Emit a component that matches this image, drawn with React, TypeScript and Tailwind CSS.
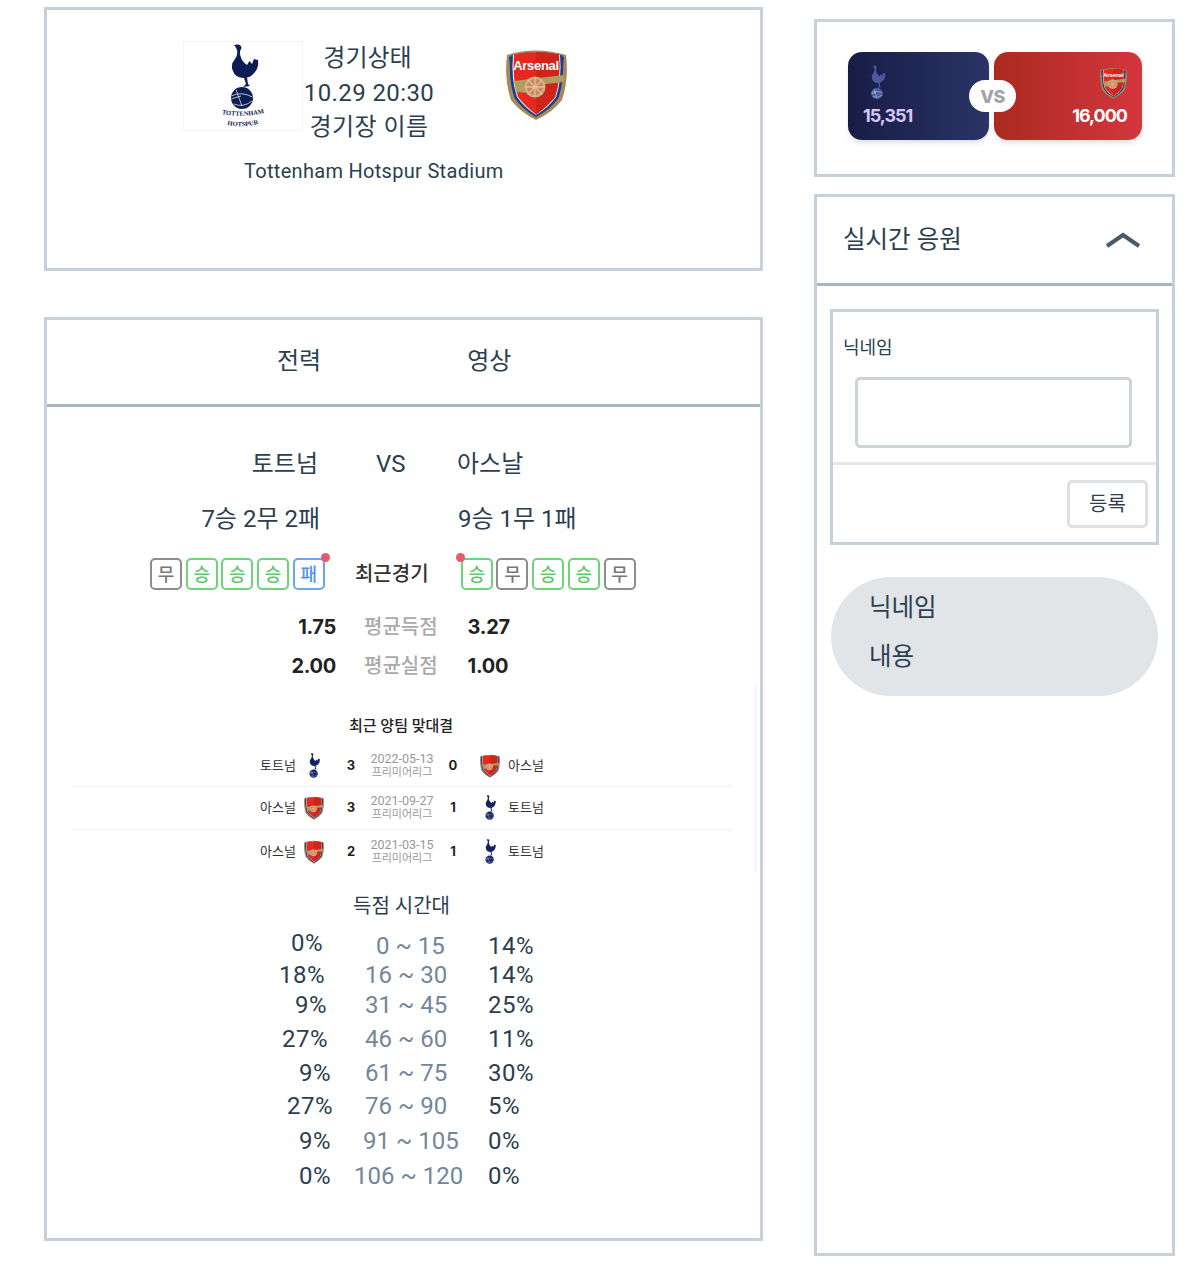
const font = "font-['Roboto','Noto_Sans_CJK_KR',sans-serif]";
const numFont = "font-['Inter','Noto_Sans_CJK_KR',sans-serif]";

function SpursLogo({ className, fill = "#0b1d54", label = false }: { className?: string; fill?: string; label?: boolean }) {
  return (
    <svg viewBox={label ? "0 0 44 85" : "0 0 44 68"} className={className}>
      <path
        fill={fill}
        d="M13 1L16 .5Q20 0 20.5 4Q18 8 19.5 12Q21 18 26 21L28.5 17L31 20L33 15L37 16Q38 23 34 28Q30 33 26 33.5L27 40L29 42L22 43L25 40L23 34Q14 34 11.5 26Q9.5 20 14 15Q17 11 16 6Q15 3 13 1Z"
      />
      <circle cx="21" cy="54" r="11" fill={fill} />
      <path d="M10.5 52Q20 47 31.5 53M13 60Q22 64 31 57M15 46L21 62M10 55L20 52" stroke="#fff" strokeWidth="0.7" fill="none" />
      {label && (
        <>
          <path id="spurs-top" d="M1 70Q22 74 43 69" fill="none" />
          <path id="spurs-bottom" d="M6 81Q22 84 38 80" fill="none" />
          <text fontSize="6.5" fontWeight="700" fill={fill} textAnchor="middle" fontFamily="Liberation Serif, serif">
            <textPath href="#spurs-top" startOffset="50%">TOTTENHAM</textPath>
          </text>
          <text fontSize="6.5" fontWeight="700" fill={fill} textAnchor="middle" fontFamily="Liberation Serif, serif">
            <textPath href="#spurs-bottom" startOffset="50%">HOTSPUR</textPath>
          </text>
        </>
      )}
    </svg>
  );
}

function ArsenalLogo({ className, text = true }: { className?: string; text?: boolean }) {
  return (
    <svg viewBox="0 0 61 71" className={className}>
      <path d="M1 6Q30 -3 60 6Q63 30 56 51Q47 63 30 71Q14 63 5 51Q-2 30 1 6Z" fill="#a5895a" />
      <path d="M3 8Q5 30 9 47L14 47L7 7ZM58 8Q56 30 52 47L47 47L54 7Z" fill="#1a3f8b" />
      <path d="M4.5 6.5Q30 0 56.5 6.5Q59 30 52.5 49Q45 60 30 68Q16 60 8.5 49Q2 30 4.5 6.5Z" fill="#1a3f8b" />
      <path d="M7 6Q30 1 54 6Q56 30 50 48Q43 58 30 66Q18 58 11 48Q5 30 7 6Z" fill="#fff" />
      <path d="M8 5.5Q30 1 53 5.5Q55 30 49 48Q42 57 30 65.5Q19 57 12 48Q6 30 8 5.5Z" fill="#e5291f" />
      <path d="M30 3Q42 3 53 5.5Q55 30 49 48Q42 57 30 65.5Z" fill="#cf2419" />
      {text && (
        <text x="30" y="21" textAnchor="middle" fontSize="13" fontWeight="700" fill="#fff" fontFamily="Liberation Sans, sans-serif" letterSpacing="-0.3">
          Arsenal
        </text>
      )}
      <path d="M8 32L24 30L58 26V33L40 35L22 44L10 43Z" fill="#b39a63" />
      <circle cx="29" cy="38" r="10.5" fill="#c9b184" />
      <circle cx="29" cy="38" r="8" fill="#e5291f" opacity="0.35" />
      <path d="M29 28V48M19 38H39M22 31L36 45M36 31L22 45" stroke="#d9c49a" strokeWidth="1.3" />
    </svg>
  );
}

function Badge({ v, dot }: { v: string; dot?: "left" | "right" }) {
  const tone = v === "승" ? "border-[#6fd37a] text-[#5ec96b]" : v === "패" ? "border-[#6aa5f5] text-[#4f92f2]" : "border-[#8d8d8d] text-[#777]";
  return (
    <div className={`relative flex h-[32px] w-[32px] items-center justify-center rounded-[5px] border-2 text-[18px] font-medium ${tone}`}>
      {v}
      {dot === "right" && <span className="absolute right-[-7px] top-[-7px] h-[9px] w-[9px] rounded-full bg-[#e8596a]" />}
      {dot === "left" && <span className="absolute left-[-7px] top-[-7px] h-[9px] w-[9px] rounded-full bg-[#e8596a]" />}
    </div>
  );
}

function MatchRow({ left, leftLogo, a, date, b, rightLogo, right, rowClass }: { left: string; leftLogo: string; a: number; date: string; b: number; rightLogo: string; right: string; rowClass: string }) {
  const logo = (t: string) =>
    t === "s" ? <SpursLogo className="h-[26px] w-[18px]" fill="#13235f" /> : <ArsenalLogo className="h-[24px] w-[20px]" text={false} />;
  return (
    <div className={`flex items-center ${rowClass}`}>
      <span className="w-[224px] text-right text-[13px] text-[#333]">{left}</span>
      <span className="ml-[7px] flex w-[22px] justify-center">{logo(leftLogo)}</span>
      <span className={`${numFont} ml-[19px] w-[14px] text-center text-[13px] font-bold text-[#222]`}>{a}</span>
      <div className="ml-[9px] w-[70px] text-center text-[#999]">
        <div className="text-[12.5px] leading-[14px]">{date}</div>
        <div className="text-[11px] leading-[14px]">프리미어리그</div>
      </div>
      <span className={`${numFont} ml-[9px] w-[14px] text-center text-[13px] font-bold text-[#222]`}>{b}</span>
      <span className="ml-[19px] flex w-[22px] justify-center">{logo(rightLogo)}</span>
      <span className="ml-[7px] text-[13px] text-[#333]">{right}</span>
    </div>
  );
}

const goalRows = [
  { l: "0%", lw: "w-[276px] mt-[-6px]", m: "0 ~ 15", mw: "pl-[53px] w-[165px]", r: "14%", h: "h-[30px]" },
  { l: "18%", lw: "w-[278px]", m: "16 ~ 30", mw: "pl-[40px] w-[163px]", r: "14%", h: "h-[28px]" },
  { l: "9%", lw: "w-[280px]", m: "31 ~ 45", mw: "pl-[38px] w-[161px]", r: "25%", h: "h-[32px]" },
  { l: "27%", lw: "w-[281px]", m: "46 ~ 60", mw: "pl-[37px] w-[160px]", r: "11%", h: "h-[36px]" },
  { l: "9%", lw: "w-[284px]", m: "61 ~ 75", mw: "pl-[34px] w-[157px]", r: "30%", h: "h-[32px]" },
  { l: "27%", lw: "w-[286px]", m: "76 ~ 90", mw: "pl-[32px] w-[155px]", r: "5%", h: "h-[34px]" },
  { l: "9%", lw: "w-[284px]", m: "91 ~ 105", mw: "pl-[32px] w-[157px]", r: "0%", h: "h-[36px]" },
  { l: "0%", lw: "w-[284px]", m: "106 ~ 120", mw: "pl-[23px] w-[157px]", r: "0%", h: "h-[34px]" },
];

export default function App() {
  return (
    <div className={`${font} flex min-h-[1284px] w-[1190px] items-start bg-white pl-[44px] text-[#2c3e50]`}>
      <div className="flex w-[719px] flex-col gap-[46px] pt-[7px]">
        <section className="h-[264px] border-[3px] border-[#c6d1dc]">
          <div className="flex items-start pt-[31px] pl-[136px]">
            <div className="flex h-[90px] w-[120px] items-center justify-center border border-[#f4f4f4]">
              <SpursLogo className="h-[85px] w-[44px]" label />
            </div>
            <div className="flex w-[132px] flex-col items-center whitespace-nowrap text-[24px] leading-[34.5px]">
              <span className="ml-[-3px]">경기상태</span>
              <span className="tracking-[0.4px]">10.29 20:30</span>
              <span className="tracking-[0.4px]">경기장 이름</span>
            </div>
            <ArsenalLogo className="ml-[71px] mt-[8px] h-[71px] w-[61px]" />
          </div>
          <p className="ml-[197px] mt-[12px] text-[20px] leading-[28px] tracking-[0.3px]">Tottenham Hotspur Stadium</p>
        </section>

        <section className="relative h-[924px] border-[3px] border-[#c6d1dc]">
          <div className="flex h-[87px] items-center border-b-[3px] border-[#a9b5c1] pl-[230px] pb-[3px] text-[24px]">
            <span>전력</span>
            <span className="ml-[146px]">영상</span>
          </div>

          <div className="mt-[37px] flex items-center text-[24px] leading-[40px]">
            <span className="w-[271px] text-right">토트넘</span>
            <span className="ml-[58px] w-[29px] text-center">VS</span>
            <span className="ml-[52px]">아스날</span>
          </div>
          <div className="mt-[15px] flex items-center text-[24px] leading-[40px]">
            <span className="w-[273px] text-right">7승 2무 2패</span>
            <span className="ml-[138px]">9승 1무 1패</span>
          </div>

          <div className="mt-[19px] flex items-center">
            <div className="ml-[103px] flex gap-[3.7px]">
              <Badge v="무" />
              <Badge v="승" />
              <Badge v="승" />
              <Badge v="승" />
              <Badge v="패" dot="right" />
            </div>
            <span className="ml-[30px] w-[74px] text-center text-[20px] font-medium text-[#333]">최근경기</span>
            <div className="ml-[32px] flex gap-[3.7px]">
              <Badge v="승" dot="left" />
              <Badge v="무" />
              <Badge v="승" />
              <Badge v="승" />
              <Badge v="무" />
            </div>
          </div>

          <div className="mt-[17px] flex h-[39px] items-center text-[20px]">
            <span className={`${numFont} w-[289px] text-right font-bold tracking-[-0.3px] text-[#222]`}>1.75</span>
            <span className="ml-[28px] font-medium text-[#aaa]">평균득점</span>
            <span className={`${numFont} ml-[30px] font-bold tracking-[-0.3px] text-[#222]`}>3.27</span>
          </div>
          <div className="flex h-[39px] items-center text-[20px]">
            <span className={`${numFont} w-[289px] text-right font-bold tracking-[-0.3px] text-[#222]`}>2.00</span>
            <span className="ml-[28px] font-medium text-[#aaa]">평균실점</span>
            <span className={`${numFont} ml-[30px] font-bold tracking-[-0.3px] text-[#222]`}>1.00</span>
          </div>

          <div className="mt-[29px] pl-[302px] text-[15px] font-medium leading-[24px] text-[#222]">최근 양팀 맞대결</div>
          <div className="mx-[25px] mt-[7px] w-[660px] text-[#333]">
            <MatchRow left="토트넘" leftLogo="s" a={3} date="2022-05-13" b={0} rightLogo="a" right="아스널" rowClass="h-[42px] border-b border-[#f0f1f3]" />
            <MatchRow left="아스널" leftLogo="a" a={3} date="2021-09-27" b={1} rightLogo="s" right="토트넘" rowClass="h-[43px] border-b border-[#f0f1f3]" />
            <MatchRow left="아스널" leftLogo="a" a={2} date="2021-03-15" b={1} rightLogo="s" right="토트넘" rowClass="h-[43px]" />
          </div>

          <div className="mt-[18px] pl-[306px] text-[20px] leading-[30px]">득점 시간대</div>
          <div className="mt-[10px] text-[24px]">
            {goalRows.map((row) => (
              <div key={row.m} className={`flex items-center ${row.h}`}>
                <span className={`text-right tracking-[0.5px] ${row.lw}`}>{row.l}</span>
                <span className={`text-[#74869a] ${row.mw}`}>{row.m}</span>
                <span className="tracking-[0.5px]">{row.r}</span>
              </div>
            ))}
          </div>

          <div className="absolute left-[707px] top-[365px] h-[187px] w-[3px] bg-[#f6f6f8]" />
        </section>
      </div>

      <aside className="ml-[51px] flex w-[361px] flex-col gap-[17px] pt-[19px]">
        <section className="flex h-[158px] items-start border-[3px] border-[#c6d1dc] pl-[31px] pt-[30px]">
          <div className="relative flex gap-[5px]">
            <div className="flex h-[88px] w-[141px] flex-col justify-between rounded-[14px] bg-gradient-to-r from-[#171d45] to-[#2b3468] px-[15px] pb-[14px] pt-[13px] shadow-md">
              <SpursLogo className="ml-[3px] h-[36px] w-[23px]" fill="#4a5a9a" />
              <span className={`${numFont} text-[18px] font-bold leading-[20px] tracking-[-1px] text-[#d9c5f5]`}>15,351</span>
            </div>
            <div className="flex h-[88px] w-[148px] flex-col items-end justify-between rounded-[14px] bg-gradient-to-r from-[#ab2a20] to-[#d4363c] px-[15px] pb-[14px] pt-[15px] shadow-md">
              <ArsenalLogo className="h-[32px] w-[27px]" />
              <span className={`${numFont} text-[18px] font-bold leading-[20px] tracking-[-1px] text-white`}>16,000</span>
            </div>
            <span className={`${numFont} absolute left-[121px] top-[28px] flex h-[32px] w-[47px] items-center justify-center rounded-full bg-white text-[18px] font-extrabold tracking-[-0.5px] text-[#a3a3a3]`}>
              VS
            </span>
          </div>
        </section>

        <section className="h-[1062px] border-[3px] border-[#c6d1dc]">
          <div className="flex h-[89px] items-center justify-between border-b-[3px] border-[#a9b5c1] pl-[26px] pr-[31px]">
            <span className="text-[24.5px]">실시간 응원</span>
            <svg viewBox="0 0 36 16" className="h-[16px] w-[36px]">
              <path d="M2 14L18 3L34 14" fill="none" stroke="#495a6a" strokeWidth="4" />
            </svg>
          </div>
          <div className="ml-[13px] mt-[23px] h-[236px] w-[329px] border-[3px] border-[#c6d1dc]">
            <div className="h-[153px] border-b-[3px] border-[#e4e8ec]">
              <p className="pl-[10px] pt-[24px] text-[18px] leading-[24px]">닉네임</p>
              <div className="ml-[22px] mt-[17px] h-[71px] w-[277px] rounded-[5px] border-[3px] border-[#ccd3da]" />
            </div>
            <div className="flex justify-end pr-[8px] pt-[15px]">
              <button className={`h-[48px] w-[81px] rounded-[5px] border-[3px] border-[#dde1e6] text-[20px] ${font}`}>등록</button>
            </div>
          </div>
          <div className="ml-[14px] mt-[32px] h-[119px] w-[327px] rounded-[60px] bg-[#e2e5e8] pl-[38px] pt-[6px] text-[24.5px] leading-[49px]">
            <p>닉네임</p>
            <p>내용</p>
          </div>
        </section>
      </aside>
    </div>
  );
}
